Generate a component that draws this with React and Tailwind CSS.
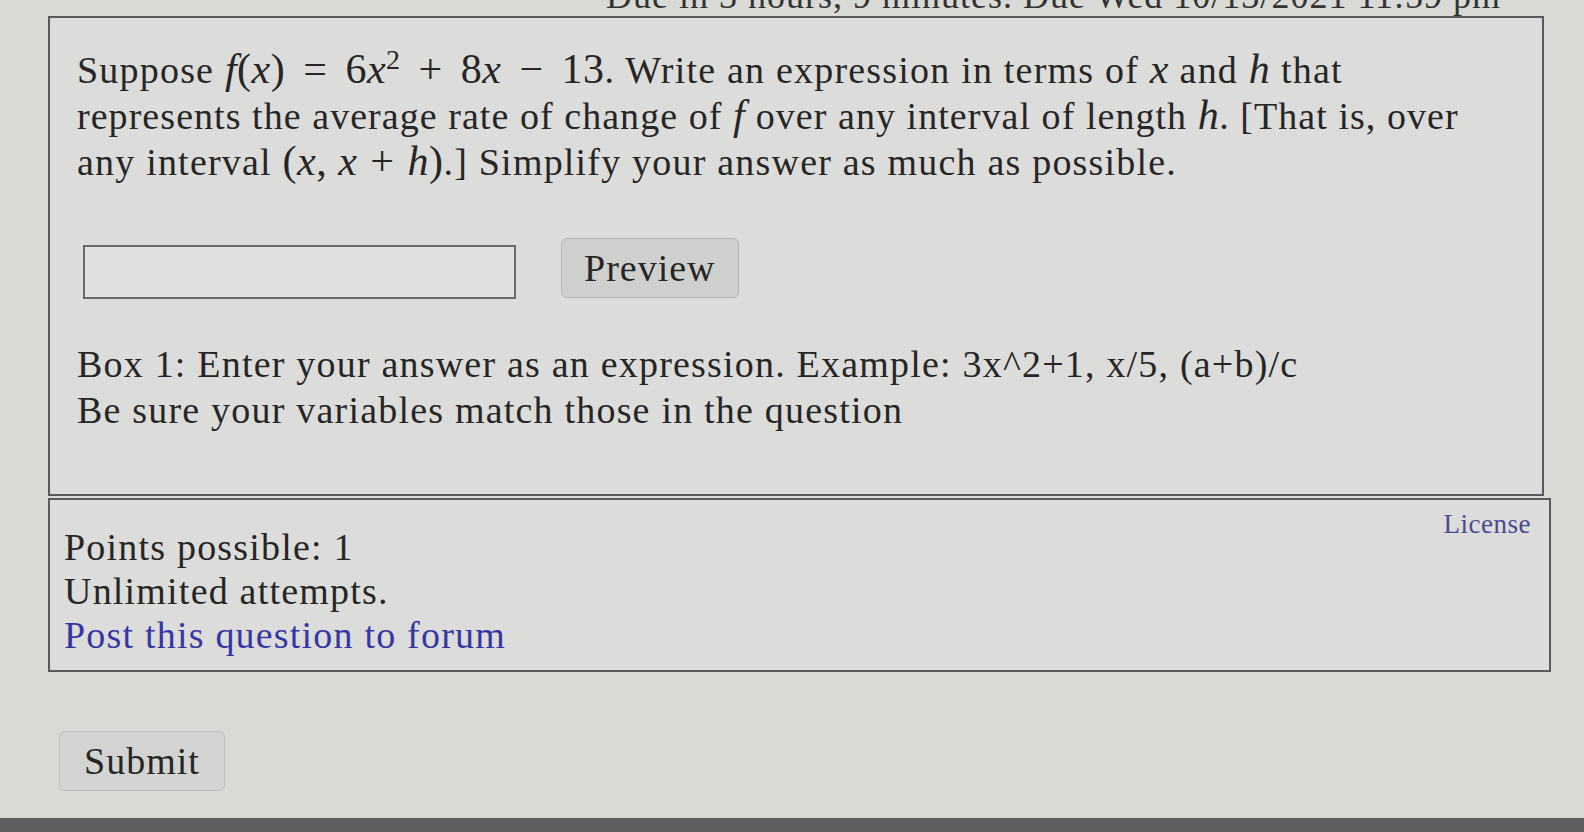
const serif = { fontFamily: '"Liberation Serif", "Times New Roman", serif' };

function V({ children }) {
  return <i className="italic">{children}</i>;
}

function M({ children }) {
  return <span className="text-[42px] leading-[30px] tracking-[0.5px]">{children}</span>;
}

export default function App() {
  return (
    <main
      className="relative h-[832px] w-[1584px] overflow-hidden bg-[#d9d9d6] text-[#262626]"
      style={serif}
    >
      <div className="-mt-[22px] h-[38px] whitespace-nowrap pl-[606px] text-[36px] leading-[36px] tracking-[1px] text-[#333]">
        Due in 3 hours, 9 minutes. Due Wed 10/13/2021 11:59 pm
      </div>

      <div className="pl-[48px]">
        <section className="w-[1496px] border-2 border-[#5a5a5a] bg-[#dcdcda] pl-[27px] pr-6 pt-[29px] pb-[61px]">
          <div className="whitespace-nowrap text-[38px] leading-[46px] tracking-[1.2px]">
            <p>
              Suppose{" "}
              <M>
                <V>f</V>(<V>x</V>)<span className="mx-[18px]">=</span>6<V>x</V>
                <sup className="text-[28px]">2</sup>
                <span className="mx-[18px]">+</span>8<V>x</V>
                <span className="mx-[18px]">−</span>13
              </M>
              . Write an expression in terms of{" "}
              <M>
                <V>x</V>
              </M>{" "}
              and{" "}
              <M>
                <V>h</V>
              </M>{" "}
              that
            </p>
            <p className="tracking-[1.05px]">
              represents the average rate of change of{" "}
              <M>
                <V>f</V>
              </M>{" "}
              over any interval of length{" "}
              <M>
                <V>h</V>
              </M>
              . [That is, over
            </p>
            <p>
              any interval{" "}
              <M>
                (<V>x</V>, <V>x</V>
                <span className="mx-[13px]">+</span>
                <V>h</V>)
              </M>
              .] Simplify your answer as much as possible.
            </p>
          </div>

          <div className="mt-[60px] flex items-center gap-[45px] pl-[6px]">
            <input
              className="h-[54px] w-[433px] border-2 border-[#6a6a6a] bg-[#e0e0de] outline-none"
              type="text"
            />
            <button
              className="-mt-[8px] h-[60px] rounded-md border border-[#b5b5b3] bg-[#cfd0ce] px-[22px] text-[38px] tracking-[1px] text-[#262626]"
              type="button"
              style={serif}
            >
              Preview
            </button>
          </div>

          <div className="mt-[42px] whitespace-nowrap text-[38px] leading-[46px] tracking-[1.2px]">
            <p>Box 1: Enter your answer as an expression. Example: 3x^2+1, x/5, (a+b)/c</p>
            <p>Be sure your variables match those in the question</p>
          </div>
        </section>

        <section className="mt-[2px] flex w-[1503px] justify-between border-2 border-[#5a5a5a] bg-[#dcdcda] pl-[14px] pr-[18px] pt-[25px] pb-[13px]">
          <div className="whitespace-nowrap text-[38px] leading-[44px] tracking-[1.2px]">
            <p>Points possible: 1</p>
            <p>Unlimited attempts.</p>
            <a className="text-[#3636a6]" href="#">
              Post this question to forum
            </a>
          </div>
          <a
            className="-mt-[16px] self-start text-[27px] leading-[30px] tracking-[0.5px] text-[#4a4a92]"
            href="#"
          >
            License
          </a>
        </section>

        <button
          className="ml-[11px] mt-[59px] h-[60px] w-[166px] rounded-md border border-[#bdbdbb] bg-[#d3d4d2] text-[38px] tracking-[1px] text-[#262626]"
          type="button"
          style={serif}
        >
          Submit
        </button>
      </div>

      <div className="absolute bottom-0 left-0 h-[14px] w-full bg-[#5f5f5f]" />
    </main>
  );
}
